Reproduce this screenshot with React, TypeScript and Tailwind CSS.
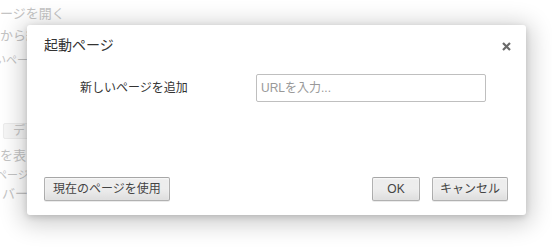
import React from "react";

const FONT = { fontFamily: '"Liberation Sans", "Noto Sans CJK JP", sans-serif' };

function Btn({ children, className = "" }: { children: React.ReactNode; className?: string }) {
  return (
    <button
      className={
        "h-[24px] min-w-[48px] whitespace-nowrap rounded-[2px] border border-[rgba(0,0,0,0.25)] bg-gradient-to-b from-[#ededed] via-[#ededed] to-[#dedede] text-[12px] leading-[22px] text-[#444] shadow-[0_1px_0_rgba(0,0,0,0.08),inset_0_1px_2px_rgba(255,255,255,0.75)] " +
        className
      }
    >
      {children}
    </button>
  );
}

export default function App() {
  return (
    <div className="relative w-[552px] h-[248px] bg-white overflow-hidden" style={FONT}>
      {/* background page (covered by the dialog beyond x=27) */}
      <div className="flex flex-col text-[#c4c4c4] whitespace-nowrap">
        <div className="pt-[6px] text-[13px] leading-[16px]">ージを開く</div>
        <div className="w-[30px] overflow-hidden flex flex-col">
          <div className="mt-[6px] text-[13px] leading-[16px]">から続</div>
          <div className="mt-[9px] ml-[-5px] text-[11px] leading-[14px]">いペー</div>
          <div className="mt-[56px] ml-[3px] h-[16px] w-[60px] border border-[#ececec] bg-[#f6f6f6] rounded-[2px] pl-[9px] text-[12px] leading-[14px]">
            デ
          </div>
          <div className="mt-[9px] text-[13px] leading-[16px]">を表</div>
          <div className="mt-[4px] ml-[-4px] text-[11px] leading-[14px]">ページ</div>
          <div className="mt-[4px] ml-[2px] text-[13px] leading-[16px]">バーを</div>
        </div>
      </div>

      {/* dialog overlay */}
      <div className="absolute left-[27px] top-[25px] w-[499px] h-[190px] bg-white rounded-[3px] shadow-[0_4px_23px_5px_rgba(0,0,0,0.2),0_2px_6px_rgba(0,0,0,0.15)] flex flex-col">
        <div className="h-[40px] pt-[10px] pl-[17px] pr-[15px] flex items-start justify-between">
          <div className="text-[14px] leading-[20px] text-[#333]">起動ページ</div>
          <button className="mt-[7px] w-[9px] h-[9px] flex items-center justify-center">
            <svg width="9" height="9" viewBox="0 0 9 9">
              <path d="M1 1 L8 8 M8 1 L1 8" stroke="#6a6a6a" strokeWidth="2.2" strokeLinecap="butt" />
            </svg>
          </button>
        </div>
        <div className="mt-[9px] h-[28px] flex items-center">
          <div className="w-[229px] pl-[53px] text-[12px] text-[#333]">新しいページを追加</div>
          <div className="w-[230px] h-[28px] border border-[#bfbfbf] rounded-[2px] pl-[4px] flex items-center text-[12px] text-[#999]">
            URLを入力...
          </div>
        </div>
        <div className="flex-1" />
        <div className="pl-[17px] pr-[18px] pb-[14px] flex items-center">
          <Btn className="px-[8px]">現在のページを使用</Btn>
          <div className="flex-1" />
          <Btn className="w-[47px] px-0">OK</Btn>
          <Btn className="ml-[12px] w-[76px] px-0">キャンセル</Btn>
        </div>
      </div>
    </div>
  );
}
